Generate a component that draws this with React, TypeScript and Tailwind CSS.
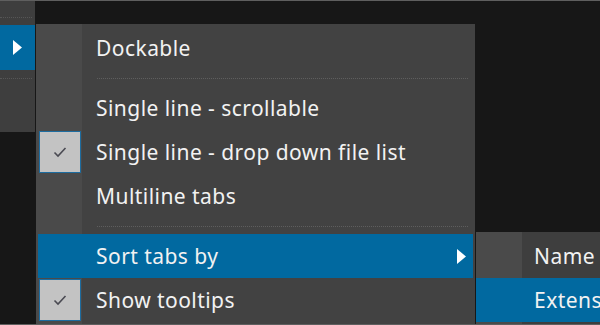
import React from 'react';

const font = { fontFamily: '"Noto Sans", "Open Sans", sans-serif' };

function Arrow() {
    return (
        <svg width="9" height="15" viewBox="0 0 9 15" className="shrink-0">
            <path d="M0 0 L9 7.5 L0 15 Z" fill="#ffffff" />
        </svg>
    );
}

function Check() {
    return (
        <div className="flex h-[42px] w-[42px] items-center justify-center border border-[#1d6c9f] bg-[#c3c3c3]">
            <svg width="14" height="12" viewBox="0 0 14 12">
                <path d="M1.5 6.5 L5 10 L12.5 2" fill="none" stroke="#4a4a52" strokeWidth="1.6" />
            </svg>
        </div>
    );
}

function Separator() {
    return (
        <div className="flex h-[16px] items-center pl-[59px] pr-[5px]">
            <div className="w-full border-t border-dotted border-[#5e5e5e]" />
        </div>
    );
}

type ItemProps = { label: string; checked?: boolean; active?: boolean; submenu?: boolean };

function Item({ label, checked, active, submenu }: ItemProps) {
    return (
        <div className={`flex h-[44px] items-center ${active ? 'bg-[#0169a0]' : ''}`}>
            <div className="flex w-[44px] justify-center">{checked && <Check />}</div>
            <span className="flex-1 pl-[14px] pt-[2px] text-[21px] tracking-[0.45px] text-[#f2f2f2]">{label}</span>
            {submenu && (
                <div className="pr-[7px]">
                    <Arrow />
                </div>
            )}
        </div>
    );
}

export default function App() {
    return (
        <div
            style={font}
            className="flex h-[325px] w-[600px] overflow-hidden border-y border-[#5f5f5f] bg-[#171717]"
        >
            {/* Left toolbar strip */}
            <div className="flex w-[35px] shrink-0 flex-col">
                <div className="flex h-[24px] flex-col bg-[#3e3e3e]">
                    <div className="mt-[16px] mr-[3px] border-t border-dotted border-[#565656]" />
                </div>
                <div className="flex h-[45px] items-center justify-center bg-[#0169a0]">
                    <Arrow />
                </div>
                <div className="flex h-[62px] flex-col bg-[#3e3e3e]">
                    <div className="mt-[8px] mr-[3px] border-t border-dotted border-[#565656]" />
                </div>
            </div>

            {/* Menu area */}
            <div className="ml-[1px] flex flex-col">
                <div className="h-[23px] shrink-0" />
                <div className="flex">
                    <div className="w-[439px] shrink-0 bg-[linear-gradient(to_right,#4a4a4a_46px,#424242_46px)] p-[2px]">
                        <Item label="Dockable" />
                        <Separator />
                        <Item label="Single line - scrollable" />
                        <Item label="Single line - drop down file list" checked />
                        <Item label="Multiline tabs" />
                        <Separator />
                        <Item label="Sort tabs by" active submenu />
                        <Item label="Show tooltips" checked />
                    </div>

                    {/* Submenu */}
                    <div className="ml-[1px] mt-[208px] w-[160px] shrink-0 bg-[linear-gradient(to_right,#4a4a4a_46px,#3e3e3e_46px)] pt-[2px]">
                        <div className="flex h-[44px] items-center">
                            <div className="w-[46px]" />
                            <span className="pl-[12px] pt-[2px] text-[21px] tracking-[0.45px] text-[#f2f2f2]">Name</span>
                        </div>
                        <div className="flex h-[44px] items-center bg-[#0169a0]">
                            <div className="w-[46px]" />
                            <span className="whitespace-nowrap pl-[12px] pt-[2px] text-[21px] tracking-[0.45px] text-[#f2f2f2]">Extension</span>
                        </div>
                    </div>
                </div>
            </div>
        </div>
    );
}
